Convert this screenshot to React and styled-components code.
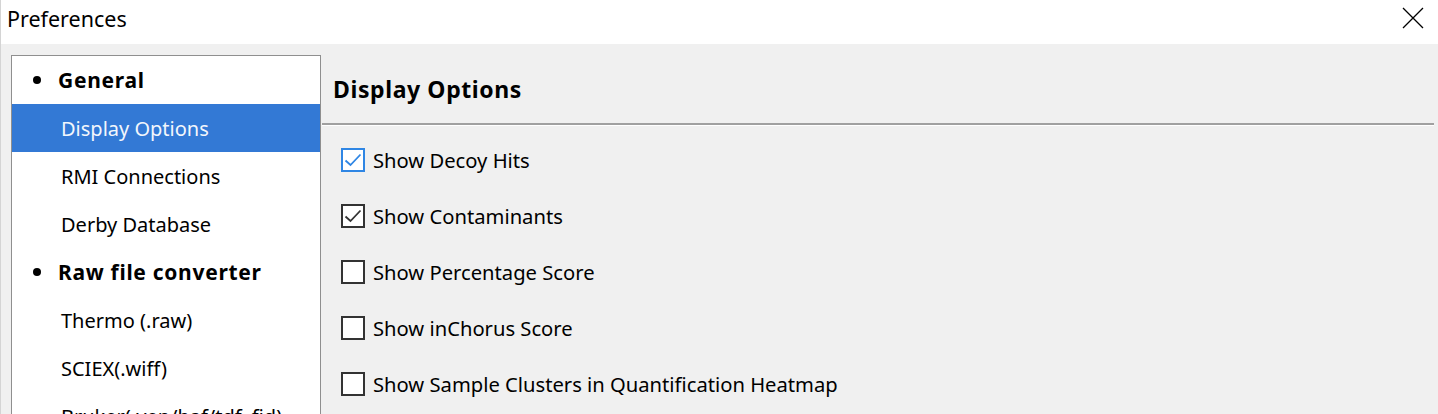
import React from "react"
import styled, { createGlobalStyle } from "styled-components"

const GlobalStyle = createGlobalStyle`
    html, body {
        margin: 0;
        padding: 0;
        background: #f0f0f0;
        overflow: hidden;
    }
    body {
        font-family: "Noto Sans", "Open Sans", "DejaVu Sans", sans-serif;
        color: #000;
    }
`

const tree = [
    { label: 'General', group: true },
    { label: 'Display Options', selected: true },
    { label: 'RMI Connections' },
    { label: 'Derby Database' },
    { label: 'Raw file converter', group: true },
    { label: 'Thermo (.raw)' },
    { label: 'SCIEX(.wiff)' },
    { label: 'Bruker(.yep/baf/tdf, fid)' },
]

const options = [
    { label: 'Show Decoy Hits', checked: true, focused: true },
    { label: 'Show Contaminants', checked: true },
    { label: 'Show Percentage Score' },
    { label: 'Show inChorus Score' },
    { label: 'Show Sample Clusters in Quantification Heatmap' },
]

const Check = ({ color }) => (
    <svg width="18" height="14" viewBox="0 0 18 14">
        <path d="M1.5 7.5 L6.5 12 L16.5 1.5" fill="none" stroke={color} strokeWidth="1.8" />
    </svg>
)

export default function App() {
    return (
        <Window>
            <GlobalStyle />
            <TitleBar>
                <Title>Preferences</Title>
                <Close aria-label="close">
                    <svg width="22" height="22" viewBox="0 0 22 22">
                        <path d="M1 1 L21 21 M21 1 L1 21" stroke="#000" strokeWidth="1.3" />
                    </svg>
                </Close>
            </TitleBar>
            <Body>
                <Tree>
                    {tree.map((item) => (
                        <TreeItem key={item.label} $group={item.group} $selected={item.selected}>
                            {item.group && <Bullet />}
                            {item.label}
                        </TreeItem>
                    ))}
                </Tree>
                <Panel>
                    <Heading>Display Options</Heading>
                    <Options>
                        {options.map((opt) => (
                            <Option key={opt.label}>
                                <Box $focused={opt.focused}>
                                    {opt.checked && <Check color={opt.focused ? '#2f86e4' : '#333'} />}
                                </Box>
                                {opt.label}
                            </Option>
                        ))}
                    </Options>
                </Panel>
            </Body>
        </Window>
    )
}

const Window = styled.div`
    width: 1438px;
    height: 414px;
    display: flex;
    flex-direction: column;
    border-left: 1px solid #d4d4d4;
    box-sizing: border-box;
    overflow: hidden;
`

const TitleBar = styled.div`
    height: 44px;
    flex: 0 0 44px;
    background: #fff;
    display: flex;
    align-items: center;
    justify-content: space-between;
    padding: 0 14px 0 6px;
`

const Title = styled.span`
    font-size: 21.5px;
    margin-top: -7px;
`

const Close = styled.button`
    border: none;
    background: transparent;
    padding: 0;
    width: 22px;
    height: 22px;
    margin-top: -8px;
    display: flex;
`

const Body = styled.div`
    flex: 1;
    display: flex;
    padding: 11px 4px 0 10px;
    background: #f0f0f0;
`

const Tree = styled.div`
    width: 308px;
    flex: 0 0 308px;
    background: #fff;
    border: 1px solid #8f8f8f;
    border-bottom: none;
    display: flex;
    flex-direction: column;
`

const TreeItem = styled.div`
    height: 48px;
    flex: 0 0 48px;
    display: flex;
    align-items: center;
    font-size: ${({ $group }) => ($group ? '21px' : '20px')};
    letter-spacing: ${({ $group }) => ($group ? '0.7px' : '0')};
    font-weight: ${({ $group }) => ($group ? 700 : 400)};
    padding-left: ${({ $group }) => ($group ? '21px' : '49px')};
    background: ${({ $selected }) => ($selected ? '#3379d5' : 'transparent')};
    color: ${({ $selected }) => ($selected ? '#f2f6fc' : '#000')};
    white-space: nowrap;
`

const Bullet = styled.span`
    width: 8px;
    height: 8px;
    border-radius: 50%;
    background: #000;
    margin-right: 17px;
`

const Panel = styled.div`
    flex: 1;
    display: flex;
    flex-direction: column;
    margin-left: 1px;
`

const Heading = styled.div`
    height: 68px;
    flex: 0 0 68px;
    display: flex;
    align-items: center;
    padding-left: 11px;
    font-size: 23px;
    letter-spacing: 0.6px;
    font-weight: 700;
    border-bottom: 2px solid #a0a0a0;
    box-shadow: 0 1px 0 #fff;
`

const Options = styled.div`
    display: flex;
    flex-direction: column;
    padding: 7px 0 0 19px;
`

const Option = styled.div`
    height: 56px;
    display: flex;
    align-items: center;
    font-size: 20.2px;
    white-space: nowrap;
`

const Box = styled.span`
    width: 24px;
    height: 24px;
    box-sizing: border-box;
    border: 2px solid ${({ $focused }) => ($focused ? '#2f86e4' : '#333')};
    background: #fff;
    margin-right: 8px;
    display: flex;
    align-items: center;
    justify-content: center;
`
